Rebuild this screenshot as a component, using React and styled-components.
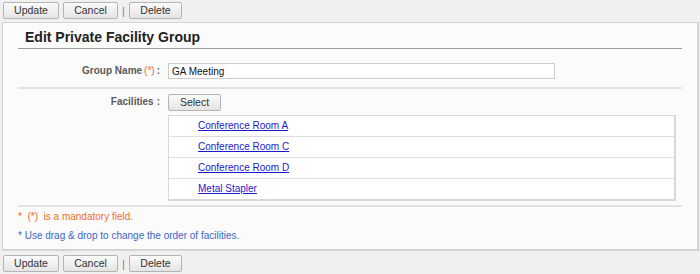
import React from "react";
import styled, { createGlobalStyle } from "styled-components";

const GlobalStyle = createGlobalStyle`
    body {
        margin: 0;
        background: #f0f0f0;
        font-family: "Liberation Sans", Arial, sans-serif;
        font-size: 10px;
        color: #333;
    }
`

const facilities = ["Conference Room A", "Conference Room C", "Conference Room D", "Metal Stapler"];

function Toolbar() {
    return (
        <Bar>
            <Button $w={56}>Update</Button>
            <Button $w={55}>Cancel</Button>
            <Divider>|</Divider>
            <Button $w={53}>Delete</Button>
        </Bar>
    )
}

export default function App() {
    return (
        <>
            <GlobalStyle />
            <Toolbar />
            <Panel>
                <Title>Edit Private Facility Group</Title>
                <Row>
                    <Label>Group Name<Req>(*)</Req><Colon>:</Colon></Label>
                    <Field>
                        <Input defaultValue="GA Meeting" />
                    </Field>
                </Row>
                <Row $last>
                    <Label>Facilities<Colon $gap={3}>:</Colon></Label>
                    <Field>
                        <Button $w={53}>Select</Button>
                        <List>
                            {facilities.map((f) => (
                                <Item key={f}><Link href="#">{f}</Link></Item>
                            ))}
                        </List>
                    </Field>
                </Row>
                <Notes>
                    <Note $color="#f26b2a">*&nbsp;&nbsp;(*)&nbsp;&nbsp;is a mandatory field.</Note>
                    <Note $color="#3a66c7">* Use drag &amp; drop to change the order of facilities.</Note>
                </Notes>
            </Panel>
            <Toolbar />
        </>
    )
}

const Bar = styled.div`
    display: flex;
    align-items: center;
    gap: 4px;
    height: 17px;
    padding: 2px 3px;
`

const Button = styled.button`
    width: ${(p) => p.$w}px;
    height: 17px;
    padding: 0;
    font-family: inherit;
    font-size: 10.5px;
    color: #333;
    background: linear-gradient(#fbfbfb, #e4e4e4);
    border: 1px solid #b4b4b4;
    border-radius: 2px;
    box-sizing: border-box;
    line-height: 15px;
`

const Divider = styled.span`
    color: #7d7890;
    font-size: 11px;
    width: 3px;
    display: flex;
    justify-content: center;
`

const Panel = styled.div`
    margin: 1px 1px 2px 2px;
    height: 229px;
    box-sizing: border-box;
    border: 1px solid #d4d4d4;
    border-width: 1px 2px 2px 1px;
    background: #fbfbfb;
    padding: 0 15px;
`

const Title = styled.h1`
    margin: 0;
    padding: 6px 0 2px 7px;
    font-size: 14px;
    font-weight: bold;
    color: #222;
    border-bottom: 1px solid #999;
    line-height: 17px;
`

const Row = styled.div`
    display: grid;
    grid-template-columns: 145px 1fr;
    column-gap: 5px;
    padding: ${(p) => (p.$last ? "5px 0 4px" : "14px 0 8px")};
    border-bottom: 2px solid #e2e2e2;
`

const Label = styled.div`
    text-align: right;
    font-weight: bold;
    color: #5a5a5a;
    line-height: 16px;
    padding-right: 3px;
`

const Req = styled.span`
    color: #f26b2a;
    font-weight: normal;
    margin-left: 2px;
`

const Colon = styled.span`
    margin-left: ${(p) => p.$gap || 2}px;
`

const Field = styled.div`
    display: flex;
    flex-direction: column;
    align-items: flex-start;
    gap: 4px;
`

const Input = styled.input`
    width: 387px;
    height: 16px;
    box-sizing: border-box;
    border: 1px solid #ccc;
    background: #fff;
    font-family: inherit;
    font-size: 10px;
    padding: 0 3px;
    color: #111;
`

const List = styled.div`
    width: 508px;
    box-sizing: border-box;
    border: 1px solid #d8d8d8;
    border-width: 1px 2px 2px 1px;
    background: #fff;
`

const Item = styled.div`
    height: 20px;
    line-height: 20px;
    padding-left: 29px;
    border-top: 1px solid #ddd;
    &:first-child {
        border-top: none;
    }
`

const Link = styled.a`
    color: #1a1acc;
    text-decoration: underline;
    font-size: 10px;
`

const Notes = styled.div`
    padding: 0;
`

const Note = styled.div`
    color: ${(p) => p.$color};
    line-height: 19px;
    font-size: 10px;
`
